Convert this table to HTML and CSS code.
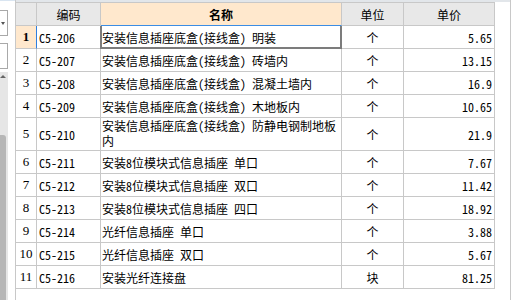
FILE: index.html
```html
<!DOCTYPE html>
<html lang="zh-CN">
<head>
<meta charset="utf-8">
<title>定额清单</title>
<link rel="stylesheet" href="styles.css">
</head>
<body>
<div class="app">
  <div class="side">
    <div class="combo"><span class="caret"></span></div>
    <div class="combo"></div>
    <div class="track">
      <span class="up"></span>
      <div class="thumb"></div>
    </div>
  </div>
  <div class="pane">
    <div class="grid">
      <div class="row head">
        <div class="c num"></div>
        <div class="c ctr">编码</div>
        <div class="c ctr active">名称</div>
        <div class="c ctr">单位</div>
        <div class="c ctr">单价</div>
      </div>
      <div class="row cur">
        <div class="c num">1</div>
        <div class="c code">C5-206</div>
        <div class="c name sel">安装信息插座底盒(接线盒) 明装</div>
        <div class="c ctr">个</div>
        <div class="c price">5.65</div>
      </div>
      <div class="row">
        <div class="c num">2</div>
        <div class="c code">C5-207</div>
        <div class="c name">安装信息插座底盒(接线盒) 砖墙内</div>
        <div class="c ctr">个</div>
        <div class="c price">13.15</div>
      </div>
      <div class="row">
        <div class="c num">3</div>
        <div class="c code">C5-208</div>
        <div class="c name">安装信息插座底盒(接线盒) 混凝土墙内</div>
        <div class="c ctr">个</div>
        <div class="c price">16.9</div>
      </div>
      <div class="row">
        <div class="c num">4</div>
        <div class="c code">C5-209</div>
        <div class="c name">安装信息插座底盒(接线盒) 木地板内</div>
        <div class="c ctr">个</div>
        <div class="c price">10.65</div>
      </div>
      <div class="row tall">
        <div class="c num">5</div>
        <div class="c code">C5-210</div>
        <div class="c name wrap">安装信息插座底盒(接线盒) 防静电钢制地板<br>内</div>
        <div class="c ctr">个</div>
        <div class="c price">21.9</div>
      </div>
      <div class="row">
        <div class="c num">6</div>
        <div class="c code">C5-211</div>
        <div class="c name">安装8位模块式信息插座 单口</div>
        <div class="c ctr">个</div>
        <div class="c price">7.67</div>
      </div>
      <div class="row">
        <div class="c num">7</div>
        <div class="c code">C5-212</div>
        <div class="c name">安装8位模块式信息插座 双口</div>
        <div class="c ctr">个</div>
        <div class="c price">11.42</div>
      </div>
      <div class="row">
        <div class="c num">8</div>
        <div class="c code">C5-213</div>
        <div class="c name">安装8位模块式信息插座 四口</div>
        <div class="c ctr">个</div>
        <div class="c price">18.92</div>
      </div>
      <div class="row">
        <div class="c num">9</div>
        <div class="c code">C5-214</div>
        <div class="c name">光纤信息插座 单口</div>
        <div class="c ctr">个</div>
        <div class="c price">3.88</div>
      </div>
      <div class="row">
        <div class="c num">10</div>
        <div class="c code">C5-215</div>
        <div class="c name">光纤信息插座 双口</div>
        <div class="c ctr">个</div>
        <div class="c price">5.67</div>
      </div>
      <div class="row">
        <div class="c num">11</div>
        <div class="c code">C5-216</div>
        <div class="c name">安装光纤连接盘</div>
        <div class="c ctr">块</div>
        <div class="c price">81.25</div>
      </div>
    </div>
  </div>
</div>
</body>
</html>
```

FILE: styles.css
```css
* { box-sizing: border-box; }
html, body { margin: 0; padding: 0; background: #fff; }
body {
  width: 513px;
  height: 300px;
  overflow: hidden;
  font-family: "Noto Sans Mono CJK SC", "Noto Sans CJK SC", sans-serif;
  font-size: 12px;
  color: #000;
}
.app {
  display: flex;
  height: 300px;
}

/* left strip */
.side {
  width: 15px;
  flex: none;
  display: flex;
  flex-direction: column;
  background: linear-gradient(#d9e5f1, #d9e5f1) top / 100% 1px no-repeat, #fff;
}
.combo {
  width: 8px;
  height: 26px;
  margin-top: 10px;
  border: 1px solid #a9a9a9;
  border-left: 0;
  background: #fff;
  display: flex;
  align-items: center;
  padding-left: 1px;
}
.combo + .combo { margin-top: 7px; }
.caret {
  width: 0;
  height: 0;
  border-left: 2px solid transparent;
  border-right: 2px solid transparent;
  border-top: 3px solid #555;
}
.track {
  width: 8px;
  margin-top: 3px;
  flex: 1;
  background: #e6e6e6;
  display: flex;
  flex-direction: column;
  padding-top: 3px;
}
.up {
  width: 0;
  height: 0;
  border-left: 3px solid transparent;
  border-right: 3px solid transparent;
  border-bottom: 3px solid #666;
}
.thumb {
  margin-top: 57px;
  flex: 1;
  width: 6px;
  background: #b6b6b6;
  border-radius: 0 3px 0 0;
}

/* grid pane */
.pane {
  width: 496px;
  flex: none;
  border-left: 1px solid #c8c8c8;
  border-right: 1px solid #c8c8c8;
  padding-top: 2px;
  background: linear-gradient(#e2e6ea, #e2e6ea) top / 100% 2px no-repeat, #fff;
}
.grid {
  display: grid;
  grid-template-columns: 21px 64px 241px 62px 91px;
  width: 479px;
  border-top: 1px solid #c8c8c8;
}
.row { display: contents; }
.c {
  height: 23px;
  border-right: 1px solid #c8c8c8;
  border-bottom: 1px solid #c8c8c8;
  display: flex;
  align-items: center;
  white-space: nowrap;
  overflow: hidden;
  background: #fff;
}
.tall .c { height: 33px; }

.head .c {
  background: #e8e8e8;
  font-family: "Noto Sans CJK SC", sans-serif;
}
.head .active {
  background: #ffe8cd;
  font-weight: bold;
  border-bottom-color: #3b8de4;
}
.ctr { justify-content: center; }

.num {
  justify-content: center;
  font-family: "Liberation Serif", "DejaVu Serif", serif;
  font-size: 13px;
}
.cur .num {
  background: #ffe8cd;
  font-weight: bold;
  border-right-color: #2f7fe0;
}
.code {
  padding-left: 2px;
  font-family: "Noto Sans Mono CJK SC", "DejaVu Sans Mono", monospace;
}
.name { padding-left: 1px; }
.name.wrap {
  display: block;
  white-space: normal;
  line-height: 15px;
  padding-top: 0;
}
.price {
  justify-content: flex-end;
  padding-right: 2px;
  font-family: "Noto Sans Mono CJK SC", "DejaVu Sans Mono", monospace;
}
.sel {
  position: relative;
  overflow: visible;
}
.sel::after {
  content: "";
  position: absolute;
  left: -1px;
  right: -1px;
  top: 0;
  bottom: -1px;
  border: 2px solid #7c7c7c;
  border-top: 0;
  pointer-events: none;
}
```
